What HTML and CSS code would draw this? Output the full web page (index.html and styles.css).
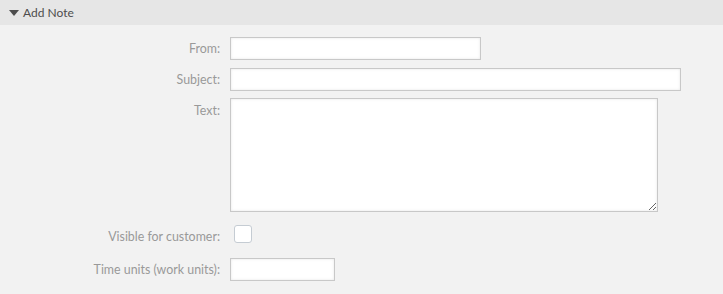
FILE: index.html
```html
<!DOCTYPE html>
<html lang="en">
<head>
    <meta charset="UTF-8">
    <meta name="viewport" content="width=device-width, initial-scale=1.0">
    <title>Add Note</title>
    <link rel="stylesheet" href="styles.css">
</head>
<body>
    <div class="widget">
        <div class="widget-header">
            <span class="caret"></span>
            <h2>Add Note</h2>
        </div>
        <div class="widget-content">
            <div class="field-row">
                <label for="from">From:</label>
                <input type="text" id="from" class="w-small">
            </div>
            <div class="field-row">
                <label for="subject">Subject:</label>
                <input type="text" id="subject" class="w-large">
            </div>
            <div class="field-row top">
                <label for="text">Text:</label>
                <textarea id="text"></textarea>
            </div>
            <div class="field-row check-row">
                <label for="visible">Visible for customer:</label>
                <span class="checkbox" id="visible"></span>
            </div>
            <div class="field-row">
                <label for="time">Time units (work units):</label>
                <input type="text" id="time" class="w-tiny">
            </div>
        </div>
    </div>
</body>
</html>
```

FILE: styles.css
```css
body {
    margin: 0;
    font-family: Lato, "Open Sans", sans-serif;
    font-size: 12px;
    background: #f2f2f2;
    color: #4d4d4d;
}
.widget-header {
    height: 25px;
    background: #e6e6e6;
    display: flex;
    align-items: center;
    padding-left: 9px;
    gap: 4px;
}
.widget-header h2 {
    margin: 0;
    font-size: 12px;
    font-weight: normal;
    color: #4d4d4d;
}
.caret {
    width: 0;
    height: 0;
    border-left: 5px solid transparent;
    border-right: 5px solid transparent;
    border-top: 6px solid #4d4d4d;
}
.widget-content {
    padding-top: 12px;
}
.field-row {
    display: flex;
    align-items: center;
    margin-bottom: 8px;
}
.field-row label {
    width: 230px;
    padding-right: 10px;
    text-align: right;
    font-size: 12.4px;
    color: #999;
    box-sizing: border-box;
    flex: none;
}
.field-row.top {
    align-items: flex-start;
    margin-top: -1px;
}
.field-row.top label {
    padding-top: 5px;
}
input, textarea {
    box-sizing: border-box;
    height: 23px;
    border: 1px solid #c8c8c8;
    background: #fff;
    box-shadow: inset 0 0 3px rgba(0, 0, 0, 0.1);
    margin: 0;
    padding: 2px 4px;
    font-family: inherit;
    font-size: 12px;
}
.w-small { width: 251px; }
.w-large { width: 451px; }
.w-tiny { width: 105px; }
textarea {
    display: block;
    width: 428px;
    height: 114px;
    resize: both;
}
.check-row {
    height: 30px;
    align-items: flex-start;
}
.check-row label {
    padding-top: 9px;
}
.checkbox {
    width: 18px;
    height: 18px;
    margin-top: 5px;
    margin-left: 4px;
    box-sizing: border-box;
    border: 1px solid #c5ccd3;
    border-radius: 3px;
    background: #fff;
}
```
